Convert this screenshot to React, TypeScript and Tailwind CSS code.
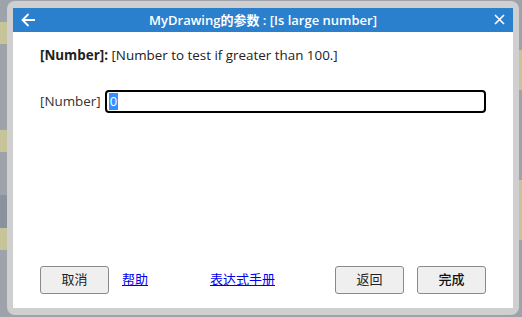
import React from "react";

export default function App() {
  const font = { fontFamily: '"Open Sans", "Noto Sans CJK SC", sans-serif' };
  return (
    <div className="relative w-[522px] h-[317px] overflow-hidden bg-[#9ea2aa]" style={font}>
      {/* background bits */}
      <div className="absolute left-0 top-[22px] w-[8px] h-[22px] bg-[#c8c49a]" />
      <div className="absolute left-0 top-[130px] w-[8px] h-[22px] bg-[#c8c49a]" />
      <div className="absolute left-0 top-[195px] w-[8px] h-[35px] bg-[#8a929e]" />
      <div className="absolute left-0 top-[228px] w-[8px] h-[22px] bg-[#c8c49a]" />
      <div className="absolute right-0 top-[50px] w-[3px] h-[40px] bg-[#c8c49a]" />
      <div className="absolute right-0 top-[180px] w-[3px] h-[60px] bg-[#c8c49a]" />

      {/* dialog frame */}
      <div className="absolute left-[7px] top-[1px] w-[512px] h-[314px] rounded-[8px] bg-[#cfcfcf] p-[6px] pt-[7px] pb-[7px]">
        <div className="flex flex-col w-full h-full bg-white">
          {/* title bar */}
          <div className="relative flex items-center justify-center h-[24px] bg-[#2b80cd] text-white">
            <svg className="absolute left-[8px] top-[5px]" width="15" height="14" viewBox="0 0 15 14" fill="none" stroke="white" strokeWidth="1.8">
              <path d="M14 7H1.5M7.5 1L1.5 7L7.5 13" />
            </svg>
            <span className="text-[13px] font-semibold leading-none">MyDrawing的参数 : [Is large number]</span>
            <svg className="absolute right-[8px] top-[6px]" width="11" height="11" viewBox="0 0 11 11" stroke="white" strokeWidth="1.6">
              <path d="M1 1L10 10M10 1L1 10" />
            </svg>
          </div>
          {/* body */}
          <div className="flex flex-col flex-1 px-[27px]">
            <div className="mt-[14px] text-[13.4px] text-[#222] leading-[18px]">
              <span className="font-bold">[Number]:</span> [Number to test if greater than 100.]
            </div>
            <div className="flex items-center mt-[26px]">
              <span className="text-[13.4px] text-[#333] w-[65px]">[Number]</span>
              <div className="flex items-center w-[382px] h-[23px] border-2 border-black rounded-[4px] px-[2px]">
                <span className="bg-[#3390ff] text-white text-[13px] leading-[17px] px-[1px]">0</span>
              </div>
            </div>
            <div className="flex-1" />
            <div className="flex items-center mb-[14px] text-[13px]">
              <button className="w-[69px] h-[28px] bg-[#efefef] border border-[#8a8a8a] rounded-[3px] text-[#222]">取消</button>
              <a className="ml-[13px] text-[#0000ee] underline">帮助</a>
              <a className="ml-[62px] text-[#0000ee] underline">表达式手册</a>
              <div className="flex-1" />
              <button className="w-[69px] h-[28px] bg-[#efefef] border border-[#8a8a8a] rounded-[3px] text-[#222]">返回</button>
              <button className="ml-[13px] w-[69px] h-[28px] bg-[#efefef] border border-[#8a8a8a] rounded-[3px] text-[#111] font-medium">完成</button>
            </div>
          </div>
        </div>
      </div>
    </div>
  );
}
